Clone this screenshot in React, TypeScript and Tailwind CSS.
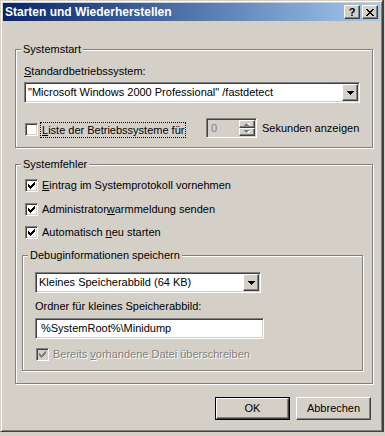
import React from 'react';

const font = "font-['Liberation_Sans',Arial,sans-serif]";
const raised =
  'border border-t-white border-l-white border-r-[#404040] border-b-[#404040] shadow-[inset_-1px_-1px_0_#808080,inset_1px_1px_0_#d4d0c8]';
const sunken =
  'border border-t-[#808080] border-l-[#808080] border-r-white border-b-white shadow-[inset_1px_1px_0_#404040,inset_-1px_-1px_0_#d4d0c8]';

const CheckMark = ({ color }: { color: string }) => (
  <svg width="7" height="7" viewBox="0 0 7 7" shapeRendering="crispEdges">
    {[2, 3, 4, 3, 2, 1, 0].map((top, i) => (
      <rect key={i} x={i} y={top} width="1" height="3" fill={color} />
    ))}
  </svg>
);

const CheckBox = ({ checked, disabled }: { checked?: boolean; disabled?: boolean }) => (
  <div
    className={`w-[13px] h-[13px] shrink-0 p-px flex items-center justify-center ${sunken} ${
      disabled ? 'bg-[#d4d0c8]' : 'bg-white'
    }`}
  >
    {checked && <CheckMark color={disabled ? '#808080' : '#000'} />}
  </div>
);

const DownArrow = ({ color = '#000' }: { color?: string }) => (
  <svg width="7" height="4" viewBox="0 0 7 4" shapeRendering="crispEdges">
    <rect x="0" y="0" width="7" height="1" fill={color} />
    <rect x="1" y="1" width="5" height="1" fill={color} />
    <rect x="2" y="2" width="3" height="1" fill={color} />
    <rect x="3" y="3" width="1" height="1" fill={color} />
  </svg>
);

const SmallArrow = ({ up }: { up?: boolean }) => (
  <svg width="6" height="4" viewBox="0 0 6 4" shapeRendering="crispEdges">
    <g transform={up ? 'translate(0 4) scale(1 -1)' : undefined}>
      <rect x="1" y="1" width="5" height="1" fill="#fff" />
      <rect x="2" y="2" width="3" height="1" fill="#fff" />
      <rect x="0" y="0" width="5" height="1" fill="#808080" />
      <rect x="1" y="1" width="3" height="1" fill="#808080" />
      <rect x="2" y="2" width="1" height="1" fill="#808080" />
    </g>
  </svg>
);

const Combo = ({ value, width }: { value: string; width: string }) => (
  <div className={`h-[21px] ${width} p-px bg-white flex items-center ${sunken}`}>
    <div className="flex-1 pl-[2px] leading-[13px] whitespace-nowrap overflow-hidden">{value}</div>
    <div className={`w-[16px] h-[17px] bg-[#d4d0c8] flex items-center justify-center ${raised}`}>
      <DownArrow />
    </div>
  </div>
);

const Group = ({
  label,
  className,
  children,
}: {
  label: string;
  className: string;
  children: React.ReactNode;
}) => (
  <div
    className={`relative border border-[#808080] shadow-[1px_1px_0_#fff,inset_1px_1px_0_#fff] ${className}`}
  >
    <span className="absolute left-[5px] -top-[7px] bg-[#d4d0c8] px-[2px] leading-[13px] whitespace-nowrap">
      {label}
    </span>
    {children}
  </div>
);

const Button = ({ label, isDefault }: { label: string; isDefault?: boolean }) =>
  isDefault ? (
    <div className="w-[75px] h-[23px] border border-black">
      <div className={`w-full h-full flex items-center justify-center leading-[13px] ${raised}`}>{label}</div>
    </div>
  ) : (
    <div className={`w-[75px] h-[23px] flex items-center justify-center leading-[13px] ${raised}`}>{label}</div>
  );

const CheckRow = ({
  checked,
  disabled,
  children,
  className = '',
}: {
  checked?: boolean;
  disabled?: boolean;
  children: React.ReactNode;
  className?: string;
}) => (
  <div className={`flex items-center h-[13px] ${className}`}>
    <CheckBox checked={checked} disabled={disabled} />
    <span
      className={`ml-[4px] leading-[13px] whitespace-nowrap ${
        disabled ? 'text-[#808080] [text-shadow:1px_1px_0_#fff]' : ''
      }`}
    >
      {children}
    </span>
  </div>
);

export default function App() {
  return (
    <div className={`w-[385px] h-[436px] bg-[#d4d0c8] overflow-hidden text-[11px] text-black ${font}`}>
      <div className="flex">
        <div
          className={`w-[383px] h-[432px] p-[2px] flex flex-col border border-t-[#d4d0c8] border-l-[#d4d0c8] border-r-[#404040] border-b-[#404040] shadow-[inset_1px_1px_0_#fff,inset_-1px_-1px_0_#808080]`}
        >
          {/* title bar */}
          <div className="h-[18px] bg-linear-to-r from-[#0a246a] to-[#a6caf0] flex items-center pl-[2px] pr-[2px]">
            <span className="flex-1 text-white font-bold text-[12px] leading-[14px] whitespace-nowrap">
              Starten und Wiederherstellen
            </span>
            <div
              className={`w-[16px] h-[14px] bg-[#d4d0c8] flex items-center justify-center font-bold text-[11px] leading-[11px] ${raised}`}
            >
              ?
            </div>
            <div className={`ml-[2px] w-[16px] h-[14px] bg-[#d4d0c8] flex items-center justify-center ${raised}`}>
              <svg width="8" height="7" viewBox="0 0 8 7" shapeRendering="crispEdges">
                {[0, 1, 2, 3, 4, 5, 6].map((i) => (
                  <g key={i}>
                    <rect x={i} y={i} width="2" height="1" fill="#000" />
                    <rect x={6 - i} y={i} width="2" height="1" fill="#000" />
                  </g>
                ))}
              </svg>
            </div>
          </div>

          <div className="pl-[12px] flex flex-col">
            {/* Systemstart */}
            <Group label="Systemstart" className="mt-[28px] w-[358px] h-[99px] pt-[15px] pl-[8px]">
              <div className="leading-[13px]">
                <u>S</u>tandardbetriebssystem:
              </div>
              <div className="mt-[4px]">
                <Combo value={'"Microsoft Windows 2000 Professional" /fastdetect'} width="w-[336px]" />
              </div>
              <div className="mt-[15px] flex items-start h-[20px]">
                <div className="w-[182px] flex items-start">
                  <div className="ml-px mt-[5px]">
                    <CheckBox />
                  </div>
                  <span className="ml-[2px] mt-[4px] border border-dotted border-black px-px leading-[14px] whitespace-nowrap">
                    <u>L</u>iste der Betriebssysteme für
                  </span>
                </div>
                <div className={`w-[51px] h-[20px] p-px bg-[#d4d0c8] flex items-stretch ${sunken}`}>
                  <span className="flex-1 pl-[3px] flex items-center text-[#808080] leading-[13px]">0</span>
                  <div className="w-[16px] flex flex-col">
                    <div className={`flex-1 flex items-center justify-center ${raised}`}>
                      <SmallArrow up />
                    </div>
                    <div className={`flex-1 flex items-center justify-center ${raised}`}>
                      <SmallArrow />
                    </div>
                  </div>
                </div>
                <span className="ml-[5px] self-center leading-[13px] whitespace-nowrap">Sekunden anzeigen</span>
              </div>
            </Group>

            {/* Systemfehler */}
            <Group label="Systemfehler" className="mt-[16px] w-[358px] h-[220px] pt-[14px] pl-[9px]">
              <CheckRow checked>
                <u>E</u>intrag im Systemprotokoll vornehmen
              </CheckRow>
              <CheckRow checked className="mt-[11px]">
                Administrator<u>w</u>armmeldung senden
              </CheckRow>
              <CheckRow checked className="mt-[10px]">
                Automatisch <u>n</u>eu starten
              </CheckRow>

              <Group
                label="Debuginformationen speichern"
                className="-ml-[3px] mt-[16px] w-[341px] h-[116px] pt-[16px] pl-[12px]"
              >
                <Combo value="Kleines Speicherabbild (64 KB)" width="w-[226px]" />
                <div className="mt-[7px] leading-[13px]">Ordner für kleines Speicherabbild:</div>
                <div className={`mt-[5px] w-[229px] h-[21px] p-px bg-white flex items-center ${sunken}`}>
                  <span className="pl-[4px] leading-[13px]">%SystemRoot%\Minidump</span>
                </div>
                <CheckRow checked disabled className="mt-[9px] ml-px">
                  Bereits <u>v</u>orhandene Datei überschreiben
                </CheckRow>
              </Group>
            </Group>

            {/* buttons */}
            <div className="mt-[13px] flex justify-end gap-[6px] pr-[9px]">
              <Button label="OK" isDefault />
              <Button label="Abbrechen" />
            </div>
          </div>
        </div>
        <div className="flex-1 border-l border-[#404040]" />
      </div>
    </div>
  );
}
